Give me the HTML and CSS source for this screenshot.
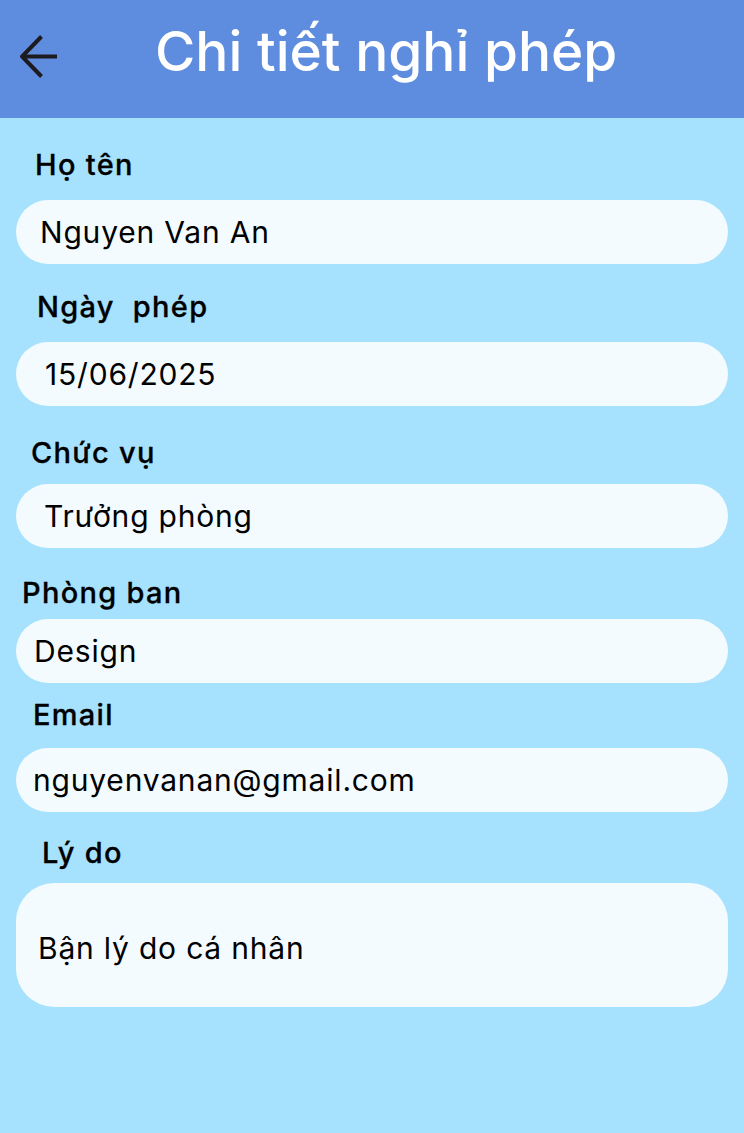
FILE: index.html
```html
<!DOCTYPE html>
<html lang="vi">
<head>
<meta charset="utf-8">
<title>Chi tiết nghỉ phép</title>
<link rel="stylesheet" href="styles.css">
</head>
<body>
<div class="app">
  <header class="topbar">
    <button class="back" aria-label="Quay lại">
      <svg width="40" height="44" viewBox="0 0 40 44" fill="none" stroke="#1d1b20" stroke-width="4" stroke-linecap="butt">
        <path d="M37 21.5H4"/>
        <path d="M21.5 1.5L2 21.5L21.5 41.5"/>
      </svg>
    </button>
    <h1 class="title">Chi tiết nghỉ phép</h1>
  </header>
  <main class="form">
    <section class="group g1">
      <div class="label">Họ tên</div>
      <div class="field">Nguyen Van An</div>
    </section>
    <section class="group g2">
      <div class="label">Ngày&nbsp; phép</div>
      <div class="field">15/06/2025</div>
    </section>
    <section class="group g3">
      <div class="label">Chức vụ</div>
      <div class="field">Trưởng phòng</div>
    </section>
    <section class="group g4">
      <div class="label">Phòng ban</div>
      <div class="field">Design</div>
    </section>
    <section class="group g5">
      <div class="label">Email</div>
      <div class="field">nguyenvanan@gmail.com</div>
    </section>
    <section class="group g6">
      <div class="label">Lý do</div>
      <div class="field tall">Bận lý do cá nhân</div>
    </section>
  </main>
</div>
</body>
</html>
```
FILE: styles.css
```css
* { box-sizing: border-box; }
html, body { margin: 0; padding: 0; }
body {
  background: #a6e1fd;
  font-family: Inter, "Noto Sans", sans-serif;
  color: #000;
  width: 744px;
  min-height: 1133px;
}
.app { display: flex; flex-direction: column; }
.topbar {
  height: 118px;
  background: #5e8ddf;
  display: flex;
  align-items: center;
  padding-left: 20px;
}
.back {
  background: none;
  border: 0;
  padding: 0;
  width: 40px;
  height: 44px;
  display: flex;
  margin-top: -4px;
}
.title {
  margin: -16px 0 0 95px;
  color: #fff;
  font-weight: 500;
  font-size: 55px;
  line-height: 60px;
  letter-spacing: 0;
}
.form {
  display: flex;
  flex-direction: column;
  padding: 0 16px;
}
.label {
  font-size: 29px;
  font-weight: 500;
  letter-spacing: 1.3px;
  line-height: 34px;
  height: 34px;
  -webkit-text-stroke: 0.3px #000;
}
.field {
  background: #f3fbfe;
  height: 64px;
  border-radius: 32px;
  display: flex;
  align-items: center;
  font-size: 30px;
  letter-spacing: 0.8px;
  line-height: 36px;
}
.field.tall { height: 124px; border-radius: 38px; padding-top: 6px; }

.g1 { margin-top: 30px; }
.g1 .label { padding-left: 19px; margin-bottom: 18px; }
.g1 .field { padding-left: 24px; }
.g2 { margin-top: 26px; }
.g2 .label { padding-left: 21px; margin-bottom: 18px; }
.g2 .field { padding-left: 29px; }
.g3 { margin-top: 30px; }
.g3 .label { padding-left: 15px; margin-bottom: 14px; }
.g3 .field { padding-left: 28px; }
.g4 { margin-top: 28px; }
.g4 .label { padding-left: 6px; margin-bottom: 9px; }
.g4 .field { padding-left: 18px; }
.g5 { margin-top: 15px; }
.g5 .label { padding-left: 17px; margin-bottom: 16px; }
.g5 .field { padding-left: 17px; }
.g6 { margin-top: 24px; }
.g6 .label { padding-left: 26px; margin-bottom: 13px; }
.g6 .field { padding-left: 22px; }
```
